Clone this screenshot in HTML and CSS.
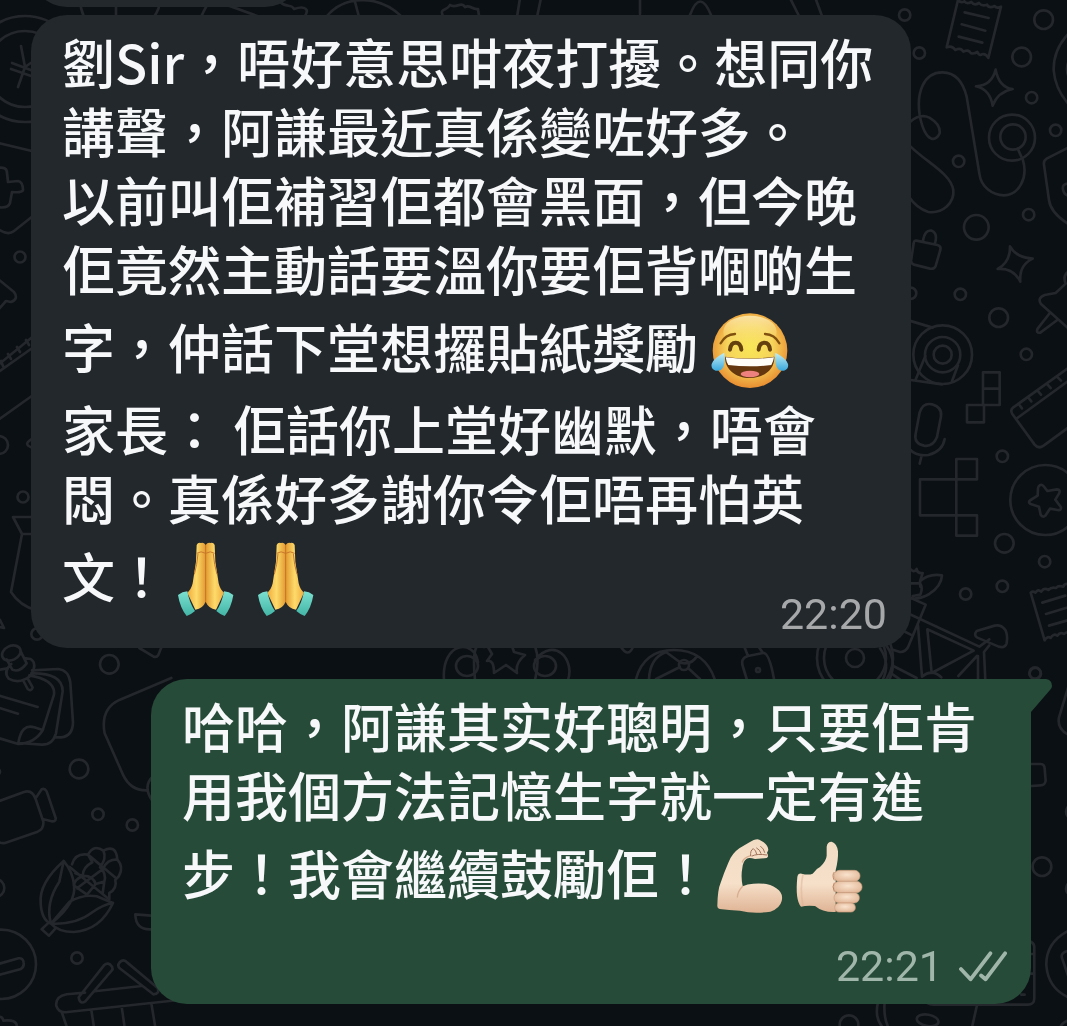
FILE: index.html
```html
<!DOCTYPE html>
<html lang="zh-HK">
  <head>
    <meta charset="UTF-8" />
    <meta name="viewport" content="width=device-width, initial-scale=1.0" />
    <title>Chat</title>
    <link rel="stylesheet" href="styles.css">
  </head>
  <body>
    <!-- doodle wallpaper -->
    <svg class="wallpaper" viewBox="0 0 1067 1026" preserveAspectRatio="xMidYMin slice" aria-hidden="true">
      <!-- left edge -->
      <g stroke-width="2.7">
        <circle cx="25" cy="69" r="53" />
        <circle cx="25" cy="69" r="38" />
        <path d="M21 46L25 67L18 87M25 67L38 58M12 63L36 72M11 69L34 77" />
        <path d="M-2 143L36 152M-3 168Q7 166 7 173L8 182L18 181Q23 182 23 190Q22 193 12 192L10 203Q8 209 -3 207M-2 229Q8 236 14 231L38 212" />
        <circle cx="20" cy="257" r="5.500" />
        <path d="M-2 279L14 292Q19 299 11 302L6 301L-3 311M-2 365L36 334M-3 373L38 344M1 361L3 366M8 354L11 359M17 347L20 352M26 340L29 345M-2 420L36 393" />
        <circle cx="-1" cy="445" r="9" />
        <circle cx="23" cy="497" r="5.500" />
        <path d="M36 437Q20 444 33 448M36 517H13L22 534H36M22 534L11 592Q20 606 36 610" />
        <path d="M80 -2Q80 8 84 17M116 -2V17M160 0Q160 8 154 17M201 17Q207 4 212 -2M213 0L260 17M278 0C286 9 291 3 294 9C306 5 310 10 304 17M326 17C345 -6 380 -5 402 17M354 -2L359 17M443 16C439 8 447 11 450 5C456 9 461 1 465 7C470 4 472 10 478 9L479 16M520 -2L517 17M541 -2L537 17" />
        <path d="M640 14V-2M690 15Q700 -12 711 15M790 -2L799 16M815 -3L822 16" />
      </g>

      <!-- between the bubbles -->
      <g stroke-width="2.700">
        <path d="M444 680C441 642 474 638 478 662M475 680C471 640 480 643 484 647M535 646C539 657 538 668 535 680M535 660C555 636 575 660 568 680" />
        <ellipse cx="467" cy="666" rx="11" ry="10" />
        <ellipse cx="545" cy="666" rx="11" ry="10" />
        <path d="M488 647L492 654L487 661Q494 659 494 673L506 665L517 673Q515 663 525 655L514 652L512 646" />
        <path d="M621 647Q628 658 633 647M636 679Q644 650 674 650Q705 650 715 680M649 679Q650 658 666 652M666 652L681 663Q692 665 697 656M680 667L656 679M688 668L700 679" />
        <circle cx="684" cy="665" r="5" />
        <path d="M744 646L748 656Q740 658 743 667L747 680M758 646L763 653Q769 652 774 679M748 656L763 653" />
        <circle cx="758" cy="670" r="2" />
        <circle cx="855" cy="658" r="38" />
        <circle cx="855" cy="658" r="31" />
        <circle cx="855" cy="658" r="9" />
      </g>

      <!-- top right -->
      <g transform="translate(880 0) scale(.3333)" stroke-width="8">
        <circle cx="74" cy="45" r="17" />
        <circle cx="118" cy="159" r="17" />
        <circle cx="491" cy="59" r="28" />
        <circle cx="425" cy="171" r="28" />
        <circle cx="455" cy="293" r="17" />
        <circle cx="527" cy="391" r="17" />
        <circle cx="236" cy="484" r="17" />
        <circle cx="446" cy="644" r="17" />
        <circle cx="289" cy="682" r="37" />
        <circle cx="241" cy="883" r="17" />
        <circle cx="356" cy="953" r="28" />
        <circle cx="92" cy="880" r="17" />
        <path d="M234 0Q243 10 253 4Q260 14 274 6Q282 18 297 9Q306 20 321 14Q327 26 344 18Q350 27 363 20L325 174Q318 160 306 163Q299 169 292 156Q280 163 272 159Q266 147 250 155Q242 142 226 150Q216 135 200 142ZM254 37L326 54M245 73L316 92M236 110L307 128" />
        <path d="M347 209Q357 262 398 267Q353 276 338 317Q330 269 288 259Q335 257 347 209ZM390 739Q409 773 458 776Q417 795 421 845Q400 803 353 807Q391 787 390 739Z" />
        <path d="M90 366Q120 340 148 353Q182 373 179 400Q170 420 154 416Q130 405 119 345C109 280 130 216 188 217Q242 218 260 290L298 520C303 562 338 586 372 586C419 585 444 531 429 481L413 446" />
        <circle cx="396" cy="413" r="69" />
        <circle cx="399" cy="411" r="38" />
        <path d="M88 436C140 488 212 520 220 570C224 609 188 642 145 636Q110 625 88 592" />
        <path d="M109 722L172 735Q184 738 181 750L167 798Q163 808 150 806L102 794Q90 790 94 777L101 730Q102 721 109 722ZM129 723Q134 688 155 692Q175 701 164 733" />
        <path d="M570 96Q520 146 521 210Q525 268 570 318M570 174Q552 208 570 238M570 440L500 476Q490 482 492 494L507 600Q512 640 570 675M570 550Q543 550 550 572Q553 585 570 589" />
        <path d="M570 812Q546 825 557 851L527 879L494 885Q471 894 483 912L570 990M509 940L473 986Q467 1000 481 998L532 960M88 962L158 983" />
      </g>

      <!-- lower right -->
      <g transform="translate(880 340) scale(.3333)" stroke-width="8">
        <circle cx="188" cy="44" r="88" />
        <circle cx="188" cy="44" r="53" />
        <circle cx="188" cy="44" r="27" />
        <path d="M136 48L106 121M234 76L216 124M92 120L186 133" />
        <circle cx="439" cy="43" r="17" />
        <circle cx="367" cy="349" r="17" />
        <circle cx="373" cy="610" r="28" />
        <circle cx="494" cy="665" r="17" />
        <circle cx="367" cy="739" r="17" />
        <circle cx="257" cy="762" r="17" />
        <circle cx="465" cy="999" r="17" />
        <path d="M309 97H359V195H309ZM309 146H359M261 195H312V247H261Z" />
        <path d="M229 357H291V418H229ZM120 418H229V526H120ZM229 526H291V587H229Z" />
        <path d="M119 217Q129 187 156 193Q187 202 183 229L171 291Q159 321 132 317Q101 310 107 281ZM88 327Q110 350 145 345Q188 334 194 297M125 347L119 371" />
        <path d="M570 80L399 203Q390 210 397 222L464 314Q475 328 491 317L570 259M412 234L570 119M416 192L426 205M444 171L454 184M472 151L483 164M500 131L512 144M530 109L543 122" />
        <circle cx="496" cy="480" r="105" />
        <path d="M479 436Q486 431 493 441L502 453L531 448Q543 449 537 461L526 479L543 502Q544 512 533 510L510 506L496 527Q489 534 482 524L477 500L452 492Q442 486 452 480L473 467L474 445Q475 438 479 436Z" />
        <path d="M570 733Q553 729 550 740Q535 735 528 744Q515 740 505 750Q492 742 484 755Q474 746 466 758Q459 752 452 758L494 901Q501 887 512 894Q520 879 532 887Q540 875 552 882Q560 875 570 878M487 788L556 767M498 822L570 800M507 857L570 839" />
        <path d="M88 683Q101 702 110 687Q112 701 128 699L120 724Q145 700 186 706Q184 738 148 762Q120 778 96 775M92 730H120Q130 743 121 764L98 768M120 724L121 740" />
        <path d="M88 772L137 794L84 922Q75 937 60 936L34 928M88 822L298 920L328 898M114 856L126 1010M142 868L281 932L155 999L142 868M72 874L92 884M328 916L312 936L316 1020M291 948L235 1008M294 948V1020M126 1010Q155 985 184 1012M40 978L110 1014M30 998L60 1018" />
        <path d="M290 873Q280 886 292 893L356 920Q375 925 380 910Q384 885 376 870Q364 853 344 857Z" />
        <path d="M10 906Q56 955 28 1020M0 925Q32 970 8 1020" />
      </g>

      <!-- bottom left -->
      <g transform="translate(0 620) scale(.3333)" stroke-width="8">
        <circle cx="111" cy="42" r="17" />
        <circle cx="328" cy="133" r="28" />
        <circle cx="237" cy="447" r="28" />
        <circle cx="294" cy="583" r="17" />
        <circle cx="397" cy="615" r="17" />
        <circle cx="231" cy="1014" r="17" />
        <circle cx="-14" cy="804" r="27" />
        <circle cx="-10" cy="455" r="10" />
        <path d="M0 0L12 24L-5 20M418 84L461 110Q470 113 475 105L485 80" />
        <ellipse cx="34" cy="99" rx="29" ry="21" transform="rotate(-25 34 99)" />
        <path d="M20 118L37 149M62 94L80 130M37 149Q58 159 80 130M34 132Q8 154 26 176Q58 194 91 168Q114 132 92 117L72 114M69 180L83 207Q94 216 98 202L82 174" />
        <path d="M-5 150L22 145M96 151L174 147Q205 149 211 187L219 308Q218 348 184 352H166M94 160Q188 158 188 214L168 340Q158 375 125 374L55 369M88 166Q168 180 162 224L128 331Q104 370 55 372L-5 354M55 369Q64 310 103 322L128 330M-5 226L113 261M-5 263L54 281" />
        <path d="M514 174L360 239Q300 266 314 340L369 464Q391 512 440 511M460 468Q426 498 458 544" />
        <path d="M-5 544L72 516Q97 508 107 537L130 605Q132 627 113 635L15 669Q5 671 -5 666M110 530L125 508Q134 504 140 514L167 594Q168 606 155 604L130 598" />
        <path d="M191 723Q116 790 122 850Q125 900 153 911Q230 850 222 795Q218 755 191 723ZM191 723L178 785Q135 850 153 911L209 845Q250 822 290 829L339 849Q300 932 220 936Q175 936 153 911Q230 914 277 877Q306 855 339 849" />
        <path d="M146 908L125 928L147 947L168 924M209 741L327 838M216 733Q226 698 264 704Q282 672 310 692Q348 672 352 718Q372 741 357 768L346 780Q352 806 328 819V838M264 704L345 772M310 692Q321 715 300 742M352 718Q320 718 310 746L231 805M300 742Q320 760 313 785L287 792L261 824M264 704L277 727Q248 742 248 768Q221 780 222 797L261 824M248 768Q278 766 287 792M313 785L308 820M226 760L248 768" />
        <path d="M454 887L406 883Q407 931 454 928" />
        <circle cx="4" cy="1033" r="104" />
        <path d="M-5 1032L56 1015Q69 1013 71 1028Q73 1040 63 1047L-5 1065M-5 1191Q7 1188 10 1202Q50 1197 51 1220" />
        <path d="M312 1036Q325 1024 336 1040L338 1048L256 1144Q240 1155 236 1132ZM359 1027Q371 1015 382 1028L473 1104Q480 1122 460 1123L359 1045Q351 1037 359 1027ZM255 1118L200 1123Q165 1130 169 1158Q176 1181 203 1176L530 1141M284 1114L425 1098M185 1176L201 1222M274 1170L282 1222M365 1160L374 1222M454 1150L466 1222" />
      </g>

      <!-- bottom right -->
      <g transform="translate(820 930) scale(.3333)" stroke-width="8">
        <path d="M634 36Q644 42 643 54V204Q643 225 622 224H340Q325 224 318 216M634 72H643M634 131H643M604 194H614M174 216Q163 265 188 292M194 216Q190 262 205 292M471 226L456 292M750 0Q678 35 679 105Q684 177 750 204M750 62Q720 66 726 84L746 142M750 270Q720 278 720 300" />
        <circle cx="87" cy="284" r="28" />
        <ellipse cx="323" cy="271" rx="33" ry="17" transform="rotate(10 323 271)" />
      </g>
      <g transform="translate(1010 660) scale(.3333)" stroke-width="8">
        <circle cx="76" cy="41" r="17" />
        <circle cx="96" cy="620" r="28" />
        <circle cx="190" cy="455" r="22" />
        <circle cx="190" cy="686" r="22" />
        <path d="M180 64L147 172Q140 210 180 226M63 312H92Q104 313 104 326L107 362Q105 376 92 376L63 378" />
      </g>
    </svg>

    <!-- emoji -->
    <svg class="sprite" aria-hidden="true">
      <defs>
        <radialGradient id="face-fill" cx=".5" cy=".45" r=".56">
          <stop offset="0" stop-color="#f8e657" />
          <stop offset=".55" stop-color="#f6d45a" />
          <stop offset="1" stop-color="#e88b30" />
        </radialGradient>
        <linearGradient id="face-shine" x2="0" y2="1">
          <stop offset="0" stop-color="#fbe3a6" />
          <stop offset="1" stop-color="#fbe36a" stop-opacity="0" />
        </linearGradient>
        <linearGradient id="tear-fill" x2="0" y2="1">
          <stop offset="0" stop-color="#c3eef4" />
          <stop offset="1" stop-color="#3aa9dd" />
        </linearGradient>
        <linearGradient id="hand-left" x2="1">
          <stop offset="0" stop-color="#f0ac3c" />
          <stop offset=".5" stop-color="#fddb6b" />
          <stop offset="1" stop-color="#e39a30" />
        </linearGradient>
        <linearGradient id="cuff-fill" x2="0" y2="1">
          <stop offset="0" stop-color="#7ce0d0" />
          <stop offset="1" stop-color="#42b5a6" />
        </linearGradient>
        <linearGradient id="arm-fill" x2="0" y2="1">
          <stop offset="0" stop-color="#f3dcc4" />
          <stop offset=".6" stop-color="#f6e0c9" />
          <stop offset="1" stop-color="#dfb394" />
        </linearGradient>
        <radialGradient id="finger-fill" cx=".5" cy=".4" r=".6">
          <stop offset="0" stop-color="#f9e3cd" />
          <stop offset="1" stop-color="#e2b899" />
        </radialGradient>
      </defs>
      <symbol id="emoji-joy" viewBox="0 -12 240 273">
        <circle cx="120" cy="131" r="112" fill="url(#face-fill)" />
        <ellipse cx="120" cy="74" rx="80" ry="48" fill="url(#face-shine)" />
        <path d="M32 109Q46 82 75 81M208 109Q194 82 165 81" fill="none" stroke="#80500f" stroke-width="7" stroke-linecap="round" />
        <path d="M60 128Q62 107 77 107Q92 107 94 128M146 128Q148 107 163 107Q178 107 180 128" fill="none" stroke="#65400f" stroke-width="12" stroke-linecap="round" />
        <path d="M45 149Q120 160 193 149C195 187 162 213 120 213C77 213 44 187 45 149Z" fill="#65370f" />
        <path d="M47 151Q120 160 192 151Q190 164 184 174Q120 182 55 174Q49 165 47 151Z" fill="#fffdf7" />
        <ellipse cx="120" cy="201" rx="28" ry="10" fill="#ee817e" />
        <path d="M43 137Q47 164 40 180Q32 194 17 191Q2 186 5 171Q10 153 43 137ZM196 137Q193 164 200 180Q208 194 222 191Q237 186 234 171Q229 153 196 137Z" fill="url(#tear-fill)" />
      </symbol>
      <symbol id="emoji-pray" viewBox="0 -12 240 273">
        <path id="palm" d="M86 27Q90 18 99 21Q107 18 113 27V197Q105 217 82 221L58 170Q70 160 74 142L84 77Z" fill="url(#hand-left)" />
        <use href="#palm" transform="matrix(-1 0 0 1 226 0)" />
        <path d="M113 27V197M86 52Q99 43 113 52Q127 43 140 52M90 53L86 85L79 115M136 53L140 85L147 115" fill="none" stroke="#c9792a" stroke-width="3" />
        <path id="cuff" d="M30 177Q43 167 58 166Q65 203 81 225Q70 235 56 240Q36 215 30 177Z" fill="url(#cuff-fill)" />
        <use href="#cuff" transform="matrix(-1 0 0 1 226 0)" />
      </symbol>
      <symbol id="emoji-muscle" viewBox="0 -12 240 273">
        <path d="M16 217Q17 169 26 149Q36 119 49 89Q60 61 82 46L110 29Q133 15 142 20L155 28Q168 38 169 51L165 60Q172 70 164 75L129 78Q112 73 104 77Q93 84 91 105Q86 130 92 160Q106 153 124 152Q171 148 193 166Q215 180 209 204Q204 226 175 236Q124 244 84 233Q50 232 23 228Q15 225 16 217Z" fill="url(#arm-fill)" />
        <path d="M92 160Q78 174 76 192M91 87Q95 74 116 68" fill="none" stroke="#d8ae90" stroke-width="4" stroke-linecap="round" />
        <path d="M116 68Q114 52 124 47Q132 52 134 63M134 45Q144 50 147 61M146 40Q156 47 158 58M120 69Q135 61 165 66" fill="none" stroke="#a0735a" stroke-width="3" stroke-linecap="round" />
      </symbol>
      <symbol id="emoji-thumb" viewBox="0 -12 240 273">
        <path d="M104 41Q106 26 119 26Q135 31 138 55Q139 81 131 112V237Q93 239 69 219Q43 217 27 221Q9 201 16 132Q18 120 29 122Q49 127 62 122Q72 107 84 102Q103 84 104 68Z" fill="url(#arm-fill)" />
        <path d="M33 124Q23 165 33 219" fill="none" stroke="#dcb294" stroke-width="5" opacity=".5" />
        <g fill="url(#finger-fill)" stroke="#cf9f80" stroke-width="2">
          <rect x="126" y="112" width="78" height="33" rx="16" />
          <rect x="125" y="145" width="85" height="34" rx="16" />
          <rect x="126" y="179" width="76" height="31" rx="15" />
          <rect x="128" y="210" width="62" height="27" rx="13" />
        </g>
        <path d="M127 117Q119 126 127 142M127 149Q119 160 127 176" fill="none" stroke="#bd8665" stroke-width="3" />
      </symbol>
    </svg>

    <main class="chat">
      <div class="bubble bubble-prev" aria-hidden="true"></div>

      <div class="bubble bubble-in">
        <p>劉Sir，唔好意思咁夜打擾。想同你講聲，阿謙最近真係變咗好多。</p>
        <p>以前叫佢補習佢都會黑面，但今晚佢竟然主動話要溫你要佢背嗰啲生字，仲話下堂想攞貼紙獎勵 <svg class="emoji" role="img" aria-label="😂"><use href="#emoji-joy" /></svg></p>
        <p>家長： 佢話你上堂好幽默，唔會悶。真係好多謝你令佢唔再怕英文！<svg class="emoji" role="img" aria-label="🙏"><use href="#emoji-pray" /></svg><svg class="emoji" role="img" aria-label="🙏"><use href="#emoji-pray" /></svg></p>
        <div class="meta"><time>22:20</time></div>
      </div>

      <div class="bubble bubble-out">
        <svg class="tail" viewBox="0 0 22 34" aria-hidden="true">
          <path d="M0 0H15Q21 1 21 7Q21 9 19 11L0 33Z" />
        </svg>
        <p>哈哈，阿謙其实好聰明，只要佢肯用我個方法記憶生字就一定有進步！我會繼續鼓勵佢！<svg class="emoji" role="img" aria-label="💪🏻"><use href="#emoji-muscle" /></svg><svg class="emoji" role="img" aria-label="👍🏻"><use href="#emoji-thumb" /></svg></p>
        <div class="meta">
          <time>22:21</time>
          <svg class="ticks" viewBox="0 0 150 96" role="img" aria-label="Delivered">
            <path d="M6 56L36 88L98 7M69 76L83 88L144 7" />
          </svg>
        </div>
      </div>
    </main>
  </body>
</html>
```

FILE: styles.css
```css
body {
  margin: 0;
  background-color: #0b1014;
  color: #f7f8fa;
  font-family: "Noto Sans CJK TC", sans-serif;
}
.wallpaper {
  position: fixed;
  top: 0;
  left: 0;
  width: 100%;
  height: 100%;
  z-index: -1;
  fill: none;
  stroke: #24272c;
  stroke-linecap: round;
  stroke-linejoin: round;
}
.sprite {
  position: absolute;
  width: 0;
  height: 0;
}
.chat {
  display: flex;
  flex-direction: column;
  align-items: flex-start;
  padding: 0 36px 23px 31px;
  overflow: hidden;
}
.bubble {
  box-sizing: border-box;
  max-width: 880px;
  border-radius: 36px;
  padding: 12px 24px 12px 31px;
  font-size: 53px;
  font-weight: 500;
  line-height: 69px;
}
.bubble p {
  margin: 0;
}
.bubble-prev {
  width: 270px;
  height: 72px;
  margin-top: -65px;
  margin-bottom: 8px;
  background-color: #23282c;
}
.bubble-in {
  background-color: #23282c;
}
.bubble-out {
  position: relative;
  align-self: flex-end;
  margin-top: 31px;
  padding-bottom: 16px;
  background-color: #274b39;
  border-top-right-radius: 0;
}
.tail {
  position: absolute;
  top: 0;
  left: 100%;
  width: 22px;
  height: 34px;
  fill: #274b39;
}
.emoji {
  width: 80px;
  height: 91px;
  vertical-align: -25px;
}
.meta {
  display: flex;
  justify-content: flex-end;
  align-items: center;
  gap: 16px;
  font-family: Roboto, sans-serif;
  font-size: 43px;
  font-weight: 400;
  line-height: 44px;
}
.bubble-in .meta {
  margin-top: -31px;
  color: #a6a8aa;
}
.bubble-out .meta {
  margin-top: 24px;
  color: #a0b6aa;
}
.ticks {
  width: 48px;
  height: 31px;
  fill: none;
  stroke: #a0b6aa;
  stroke-width: 12;
  stroke-linecap: round;
  stroke-linejoin: round;
}
```
